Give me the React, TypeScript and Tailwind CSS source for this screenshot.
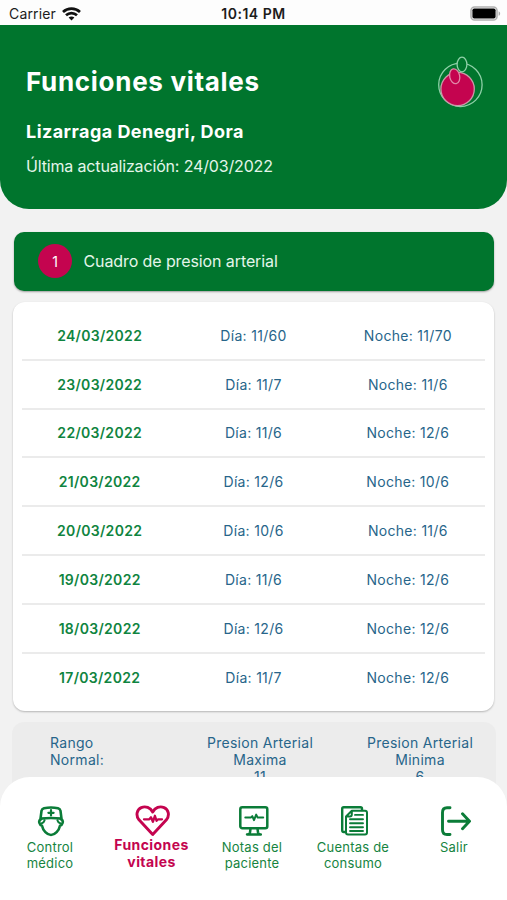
import React from "react";

type Reading = { date: string; day: string; night: string };

const readings: Reading[] = [
  { date: "24/03/2022", day: "11/60", night: "11/70" },
  { date: "23/03/2022", day: "11/7", night: "11/6" },
  { date: "22/03/2022", day: "11/6", night: "12/6" },
  { date: "21/03/2022", day: "12/6", night: "10/6" },
  { date: "20/03/2022", day: "10/6", night: "11/6" },
  { date: "19/03/2022", day: "11/6", night: "12/6" },
  { date: "18/03/2022", day: "12/6", night: "12/6" },
  { date: "17/03/2022", day: "11/7", night: "12/6" },
];

function WifiIcon() {
  return (
    <svg width="19" height="14" viewBox="0 0 19 14" fill="none" stroke="#111" strokeWidth="2.7">
      <path d="M1 4.900C5.800.4 13.200.4 18 4.900" />
      <path d="M4 8.200c3.100-2.900 7.900-2.900 11 0" />
      <path d="M9.500 13.400 6.600 10.600c1.600-1.500 4.200-1.500 5.800 0z" fill="#111" stroke="none" />
    </svg>
  );
}

function BatteryIcon() {
  return (
    <svg width="31" height="15" viewBox="0 0 31 15">
      <rect x="1" y="1" width="26" height="13" rx="3.6" fill="#fff" stroke="#b0b0b0" strokeWidth="1.6" />
      <rect x="2.4" y="2.4" width="23.2" height="10.2" rx="1.8" fill="#000" />
      <path d="M28.600 5.200c2 .8 2 3.800 0 4.600z" fill="#aaa" />
    </svg>
  );
}

function StatusBar() {
  return (
    <div className="grid h-[25px] shrink-0 grid-cols-3 items-center bg-[#fdfdfd] pt-[2px] text-[14px] leading-5 text-[#1c1c1c]">
      <div className="flex items-center gap-[6px] pl-[9px]">
        <span className="tracking-[0.15px]">Carrier</span>
        <WifiIcon />
      </div>
      <span className="text-center font-semibold tracking-[0.5px]">10:14 PM</span>
      <div className="flex justify-end pr-[6px]">
        <BatteryIcon />
      </div>
    </div>
  );
}

function Logo() {
  return (
    <svg width="48" height="52" viewBox="0 0 48 52" fill="none" stroke="#8fd0a8" strokeWidth="1.3">
      <circle cx="23.400" cy="28.800" r="21.700" />
      <circle cx="20.600" cy="33" r="16.700" fill="#c4044f" stroke="#c99ba8" />
      <ellipse cx="25" cy="8.500" rx="4.900" ry="7.300" fill="#00752d" />
      <ellipse cx="17.700" cy="20.300" rx="5" ry="7.500" fill="#c4044f" stroke="#e08aa8" transform="rotate(-12 17.7 20.3)" />
    </svg>
  );
}

const Doctor = () => (
  <svg width="28" height="32" viewBox="0 0 28 32" fill="none" stroke="#0b7c38" strokeWidth="2.6" strokeLinejoin="round" strokeLinecap="round">
    <path d="M3.500 13.600 4.500 5.800Q5 3.800 7 3.200Q14 1.700 21 3.200Q23 3.800 23.500 5.800L24.500 13.600Q14 12.400 3.500 13.600Z" />
    <path d="M3.700 14.500c-1.400.6-1.700 2.200-1.200 3.600.4 1.400 1.200 2.300 2.500 2.600C6 25.500 10 30 14 30s8-4.500 9-9.300c1.300-.3 2.100-1.200 2.500-2.600.5-1.400.2-3-1.200-3.600" />
    <path d="M4.800 18.300c1.400-.4 2.400-1.500 2.800-3M23.200 18.300c-1.400-.4-2.400-1.500-2.800-3" strokeWidth="2" />
    <path d="M14 5.200v5.200M11.400 7.800h5.200" strokeWidth="2.200" />
  </svg>
);

const HeartPulse = () => (
  <svg width="36" height="32" viewBox="0 0 36 32" fill="none" stroke="#c4044f" strokeLinejoin="round" strokeLinecap="round">
    <path d="M18.700 29.500 5 14.800C1.500 10.500 2.800 4.500 7.300 2.600c4.300-1.800 9-.1 11.400 4.400 2.400-4.500 7.100-6.200 11.400-4.400 4.500 1.900 5.800 7.900 2.300 12.200z" strokeWidth="2.900" />
    <path d="M10 14.300h5.300l1.700-2 1.900 4.500 2-6 1.700 5 1.500-1.500h3.900" strokeWidth="2.300" />
  </svg>
);

const Monitor = () => (
  <svg width="32" height="32" viewBox="0 0 32 32" fill="none" stroke="#0b7c38" strokeWidth="2.500" strokeLinejoin="round" strokeLinecap="round">
    <rect x="3.300" y="2.300" width="27" height="21" rx="2" />
    <path d="M13.500 23.500 13 27.500Q12.500 29.300 10 29.500H23.800Q21.500 29.300 21 27.500L20.500 23.500" />
    <path d="M8.300 12.600h5.500l1.500-1.500 1.700 4 2.200-5.500 1.500 3h5.500" strokeWidth="2" />
  </svg>
);

const Documents = () => (
  <svg width="29" height="32" viewBox="0 0 29 32" fill="none" stroke="#0b7c38" strokeWidth="2.400" strokeLinejoin="round" strokeLinecap="round">
    <path d="M6 27H4.700Q3.200 27 3.200 25.500V3.700Q3.200 2.200 4.700 2.200H21.500Q23 2.200 23 3.700V5" />
    <path d="M12.800 5.700H26Q28 5.700 28 7.700V27.600Q28 29.600 26 29.600H9Q7 29.600 7 27.600V11.500ZM12.800 5.700V9.500Q12.800 11.500 10.800 11.500H7" strokeWidth="2" />
    <path d="M16 9.900h8M11 14.300h13M11 18.300h13M11 22.200h13M11 26h13" strokeWidth="1.900" />
  </svg>
);

const Exit = () => (
  <svg width="32" height="32" viewBox="0 0 32 32" fill="none" stroke="#0b7c38" strokeWidth="2.900" strokeLinejoin="round" strokeLinecap="round">
    <path d="M11 2.700H8Q3.500 2.700 3.500 7.500V24.700Q3.500 29.500 8 29.500H11" />
    <path d="M9.500 16.200H30.500M23.500 8.700 30.500 16.200l-7 7.500" />
  </svg>
);

function NavItem({ icon, lines, active }: { icon: React.ReactNode; lines: string[]; active?: boolean }) {
  return (
    <button className="flex w-[101px] shrink-0 flex-col items-center text-center">
      <span className="flex h-8 items-center">{icon}</span>
      <span
        className={
          active
            ? "whitespace-nowrap text-[14px] font-bold leading-[16.5px] tracking-[0.4px] text-[#c4044f]"
            : "-ml-px mt-[2px] whitespace-nowrap text-[13px] leading-4 tracking-[0.22px] text-[#16843f]"
        }
      >
        {lines.map((line) => (
          <span key={line} className="block">
            {line}
          </span>
        ))}
      </span>
    </button>
  );
}

export default function App() {
  return (
    <div className="flex h-[900px] w-[507px] flex-col overflow-hidden bg-[#f2f2f2] font-['Inter',sans-serif]">
      <StatusBar />
      <header className="flex h-[184px] shrink-0 justify-between rounded-b-[29px] bg-[#00752d] pl-[26px] pr-[22px] text-white">
        <div className="flex flex-col">
          <h1 className="mt-[41px] text-[26px] font-bold leading-8 tracking-[0.7px]">Funciones vitales</h1>
          <p className="mt-[22px] text-[18px] font-bold leading-6 tracking-[0.45px]">Lizarraga Denegri, Dora</p>
          <p className="mt-[12px] text-[16px] leading-5 tracking-[-0.16px] text-[#e4f5ea]">Última actualización: 24/03/2022</p>
        </div>
        <div className="mt-[31px]">
          <Logo />
        </div>
      </header>
      <main className="flex min-h-0 flex-1 flex-col pl-[13px] pr-[12px] pt-[23px]">
        <section className="ml-px flex h-[59px] w-[480px] shrink-0 items-center rounded-[10px] bg-[#00752d] pl-6 pb-px shadow-[0_1px_2px_rgba(0,0,0,0.35)]">
          <span className="flex size-[34px] items-center justify-center rounded-full bg-[#c4044f] text-[14px] text-white">1</span>
          <h2 className="-mt-px ml-[11.5px] text-[16px] leading-5 tracking-[-0.1px] text-[#e4f5ea]">Cuadro de presion arterial</h2>
        </section>
        <section className="mt-[11px] h-[409px] w-[481px] shrink-0 rounded-[12px] bg-white px-[9px] pt-[10px] shadow-[0_1px_2px_rgba(0,0,0,0.25)]">
          {readings.map((r) => (
            <div
              key={r.date}
              className="grid h-[48.800px] grid-cols-3 items-center border-b-2 border-[#ebebeb] text-center text-[14px] tracking-[0.3px] text-[#27658a] last:border-b-0 last:pb-px"
            >
              <span className="pl-px font-semibold tracking-[0.3px] text-[#0f8440]">{r.date}</span>
              <span>Día: {r.day}</span>
              <span>Noche: {r.night}</span>
            </div>
          ))}
        </section>
        <section className="-ml-px mt-[11px] flex h-[100px] w-[484px] shrink-0 rounded-t-[12px] bg-[#ececec] pt-[11.5px] text-[14px] leading-[17px] tracking-[0.3px] text-[#27658a]">
          <div className="w-[168px] shrink-0 pl-[38px]">
            Rango
            <br />
            Normal:
          </div>
          <div className="w-[160px] shrink-0 text-center">
            Presion Arterial
            <br />
            Maxima
            <br />
            11
          </div>
          <div className="w-[160px] shrink-0 text-center">
            Presion Arterial
            <br />
            Minima
            <br />6
          </div>
        </section>
      </main>
      <nav className="z-10 flex h-[123px] shrink-0 rounded-t-[30px] bg-white pt-[28px]">
        <NavItem icon={<Doctor />} lines={["Control", "médico"]} />
        <NavItem icon={<HeartPulse />} lines={["Funciones", "vitales"]} active />
        <NavItem icon={<Monitor />} lines={["Notas del", "paciente"]} />
        <NavItem icon={<Documents />} lines={["Cuentas de", "consumo"]} />
        <NavItem icon={<Exit />} lines={["Salir"]} />
      </nav>
    </div>
  );
}
